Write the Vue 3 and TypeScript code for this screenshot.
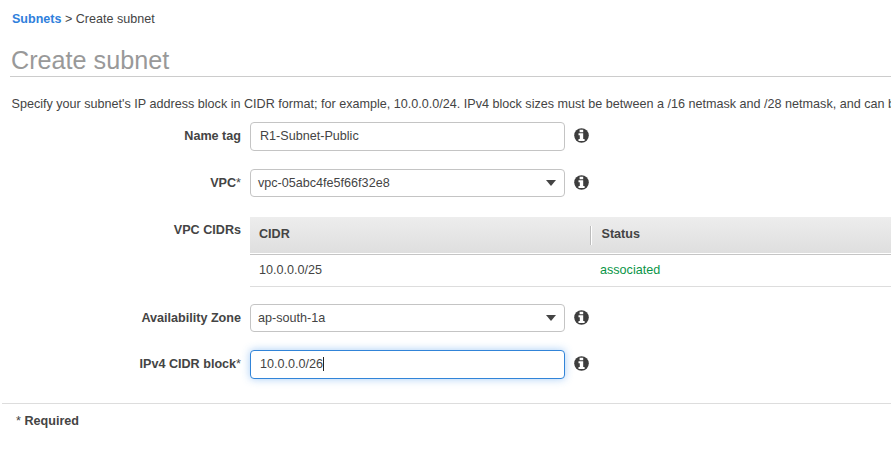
<script setup lang="ts">
import { ref } from 'vue'

interface CidrRow {
  cidr: string
  status: string
}

const nameTag = ref<string>('R1-Subnet-Public')
const vpc = ref<string>('vpc-05abc4fe5f66f32e8')
const zone = ref<string>('ap-south-1a')
const cidrBlock = ref<string>('10.0.0.0/26')
const rows: CidrRow[] = [{ cidr: '10.0.0.0/25', status: 'associated' }]
</script>

<template>
  <main class="page">
    <nav class="crumbs"><a class="crumb-link">Subnets</a> &gt; <span>Create subnet</span></nav>
    <h1 class="title">Create subnet</h1>
    <p class="intro">Specify your subnet's IP address block in CIDR format; for example, 10.0.0.0/24. IPv4 block sizes must be between a /16 netmask and /28 netmask, and can b</p>

    <svg class="defs" aria-hidden="true">
      <symbol id="info" viewBox="0 0 15 15">
        <circle cx="7.5" cy="7.5" r="7.3" fill="#3d3d3d" />
        <path d="M5.6 1.8h3.6v2.5H5.6zM4.5 5.3h4.7v5.6h1.4v2H4.5v-2h1.3V7.3H4.5z" fill="#fff" />
      </symbol>
    </svg>

    <form class="form" @submit.prevent>
      <div class="row row-name">
        <span class="label">Name tag</span>
        <div class="field input">{{ nameTag }}</div>
        <svg class="info"><use href="#info" /></svg>
      </div>
      <div class="row row-vpc">
        <span class="label">VPC<span class="star">*</span></span>
        <div class="field select">{{ vpc }}<i class="arrow"></i></div>
        <svg class="info"><use href="#info" /></svg>
      </div>
      <div class="row row-table">
        <span class="label">VPC CIDRs</span>
        <div class="table">
          <div class="thead">
            <span class="th">CIDR</span>
            <span class="th th-status">Status</span>
          </div>
          <div v-for="row in rows" :key="row.cidr" class="tr">
            <span class="td">{{ row.cidr }}</span>
            <span class="td ok">{{ row.status }}</span>
          </div>
        </div>
      </div>
      <div class="row row-zone">
        <span class="label">Availability Zone</span>
        <div class="field select">{{ zone }}<i class="arrow"></i></div>
        <svg class="info"><use href="#info" /></svg>
      </div>
      <div class="row row-block">
        <span class="label">IPv4 CIDR block<span class="star">*</span></span>
        <div class="field input focused">{{ cidrBlock }}<i class="caret"></i></div>
        <svg class="info"><use href="#info" /></svg>
      </div>
    </form>

    <footer class="required"><span class="star">*</span> Required</footer>
  </main>
</template>

<style>
body {
  background: #fff;
  overflow: hidden;
}
</style>

<style scoped>
.page {
  width: 891px;
  height: 473px;
  overflow: hidden;
  box-sizing: border-box;
  padding-top: 11px;
  font: 12.6px/16px "Liberation Sans", Arial, sans-serif;
  color: #444;
}
.crumbs {
  padding-left: 12px;
  height: 16px;
  font-size: 12.55px;
}
.crumb-link {
  color: #2f80dc;
  font-weight: bold;
}
.title {
  margin: 17px 0 0 10px;
  padding-left: 1px;
  height: 32px;
  border-bottom: 1px solid #ccc;
  font-size: 25.2px;
  line-height: 33px;
  font-weight: normal;
  color: #999;
}
.intro {
  margin: 19px 0 0 11.5px;
  height: 16px;
  white-space: nowrap;
}
.defs {
  position: absolute;
  width: 0;
  height: 0;
}
.form {
  padding-top: 10px;
}
.row {
  display: flex;
  align-items: flex-start;
}
.row-vpc {
  margin-top: 18px;
}
.row-table {
  margin-top: 20px;
}
.row-zone {
  margin-top: 17px;
}
.row-block {
  margin-top: 18px;
}
.label {
  width: 241px;
  margin-right: 9px;
  padding-top: 6px;
  text-align: right;
  font-weight: bold;
  flex: none;
}
.row-table .label {
  padding-top: 5px;
}
.field {
  width: 315px;
  box-sizing: border-box;
  border: 1px solid #c4c4c4;
  border-radius: 4px;
  background: #fff;
  display: flex;
  align-items: center;
}
.input {
  height: 29px;
  padding: 0 9px 2px;
}
.select {
  height: 28px;
  padding: 0 8px 0 7px;
}
.focused {
  border-color: #3184d8;
  box-shadow: 0 0 8px rgba(60, 145, 235, 0.45);
  padding-bottom: 1px;
}
.arrow {
  margin-left: auto;
  border: 5.5px solid transparent;
  border-top: 6px solid #444;
  border-bottom: 0;
}
.caret {
  width: 1px;
  height: 14px;
  background: #222;
}
.info {
  width: 15px;
  height: 15px;
  margin: 6px 0 0 9px;
}
.table {
  flex: 1;
}
.thead {
  display: grid;
  grid-template-columns: 340px 1fr;
  align-items: center;
  height: 36px;
  background: linear-gradient(#ededed, #dedede);
  padding-bottom: 1px;
  background-clip: content-box;
  border-bottom: 1px solid #c5c5c5;
}
.th {
  font-weight: bold;
  line-height: 17px;
  padding: 0 9px 2px;
}
.th-status {
  border-left: 1px solid #bcbcbc;
  box-shadow: inset 1px 0 #fff;
  padding-left: 10.5px;
}
.tr {
  display: grid;
  grid-template-columns: 341px 1fr;
  height: 31px;
  border-bottom: 1px solid #ddd;
}
.td {
  padding: 7px 9px 0;
}
.ok {
  color: #0a9547;
}
.required {
  margin: 24px 0 0 2px;
  border-top: 1px solid #ddd;
  padding: 9px 0 0 14px;
  font-weight: bold;
}
.star {
  font-weight: normal;
}
</style>
